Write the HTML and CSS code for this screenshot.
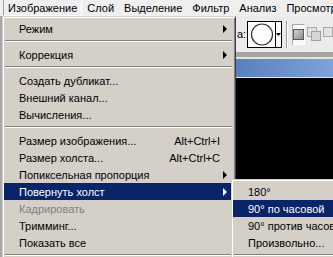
FILE: index.html
```html
<!DOCTYPE html>
<html lang="ru">
<head>
<meta charset="utf-8">
<title>Изображение</title>
<link rel="stylesheet" href="styles.css">
</head>
<body>
<div class="app">
  <div class="menubar">
    <span class="mb-item active">Изображение</span>
    <span class="mb-item">Слой</span>
    <span class="mb-item">Выделение</span>
    <span class="mb-item">Фильтр</span>
    <span class="mb-item">Анализ</span>
    <span class="mb-item">Просмотр</span>
  </div>
  <div class="workspace">
    <div class="lstrip"></div>
    <div class="rest">
      <div class="toolbar">
        <span class="tb-label">а:</span>
        <div class="brush">
          <div class="brush-prev">
            <svg width="26" height="25" viewBox="0 0 26 25"><circle cx="13" cy="12.5" r="10.5" fill="#fff" stroke="#303030" stroke-width="1.2"/></svg>
          </div>
          <div class="brush-dd">
            <svg width="5" height="3" viewBox="0 0 5 3"><polygon points="0,0 5,0 2.5,3" fill="#000"/></svg>
          </div>
        </div>
        <div class="tb-sep"></div>
        <div class="tb-btn pressed">
          <svg width="11" height="11" viewBox="0 0 11 11">
            <defs><linearGradient id="g1" x1="0" y1="0" x2="1" y2="1"><stop offset="0" stop-color="#d8d8d8"/><stop offset="1" stop-color="#8a8a8a"/></linearGradient></defs>
            <rect x="0.5" y="0.5" width="10" height="10" fill="url(#g1)" stroke="#5a5a5a"/>
          </svg>
        </div>
        <div class="tb-btn">
          <svg width="14" height="14" viewBox="0 0 14 14">
            <rect x="0.5" y="0.5" width="9" height="9" fill="#e4e4e4" stroke="#a8a8a8"/>
            <rect x="4.5" y="4.5" width="9" height="9" fill="#d6d6d6" stroke="#a0a0a0"/>
          </svg>
        </div>
        <div class="tb-btn">
          <svg width="14" height="14" viewBox="0 0 14 14">
            <rect x="0.5" y="0.5" width="9" height="9" fill="#e4e4e4" stroke="#a8a8a8"/>
          </svg>
        </div>
      </div>
      <div class="band1"></div>
      <div class="band2"></div>
      <div class="doc">
        <div class="doc-title"></div>
        <div class="doc-line"></div>
        <div class="doc-canvas"></div>
      </div>
    </div>
  </div>

  <div class="menu main-menu">
    <div class="mi"><span class="l">Режим</span><span class="a"></span></div>
    <div class="sep"></div>
    <div class="mi"><span class="l">Коррекция</span><span class="a"></span></div>
    <div class="sep"></div>
    <div class="mi"><span class="l">Создать дубликат...</span></div>
    <div class="mi"><span class="l">Внешний канал...</span></div>
    <div class="mi"><span class="l">Вычисления...</span></div>
    <div class="sep"></div>
    <div class="mi"><span class="l">Размер изображения...</span><span class="k">Alt+Ctrl+I</span></div>
    <div class="mi"><span class="l">Размер холста...</span><span class="k">Alt+Ctrl+C</span></div>
    <div class="mi"><span class="l">Попиксельная пропорция</span><span class="a"></span></div>
    <div class="mi hl"><span class="l">Повернуть холст</span><span class="a"></span></div>
    <div class="mi dis"><span class="l">Кадрировать</span></div>
    <div class="mi"><span class="l">Тримминг...</span></div>
    <div class="mi"><span class="l">Показать все</span></div>
    <div class="sep"></div>
  </div>

  <div class="menu sub-menu">
    <div class="mi"><span class="l">180°</span></div>
    <div class="mi hl"><span class="l">90° по часовой</span></div>
    <div class="mi"><span class="l">90° против часовой</span></div>
    <div class="mi"><span class="l">Произвольно...</span></div>
    <div class="sep"></div>
  </div>
</div>
</body>
</html>
```

FILE: styles.css
```css
* { box-sizing: border-box; margin: 0; padding: 0; }
html, body { width: 333px; height: 257px; overflow: hidden; }
body {
  font-family: "Liberation Sans", Arial, sans-serif;
  font-size: 11px;
  color: #000;
  background: #d4d0c8;
}
.app {
  position: relative;
  width: 333px;
  height: 257px;
  overflow: hidden;
  display: flex;
  flex-direction: column;
}

/* menu bar */
.menubar {
  flex: none;
  height: 16px;
  display: flex;
  padding-left: 3px;
  background: #efefef;
  white-space: nowrap;
}
.mb-item {
  border: 1px solid transparent;
  border-top: 0;
  padding: 1px 4px 0;
  line-height: 14px;
}
.mb-item.active {
  border-color: #a0a0a0 #fff #fff #a0a0a0;
  border-top: 0;
}

/* workspace */
.workspace { flex: 1; display: flex; min-height: 0; }
.lstrip { width: 2px; background: #a8a8a8; }
.rest { flex: 1; display: flex; flex-direction: column; min-width: 0; }

.toolbar {
  flex: none;
  height: 36px;
  display: flex;
  align-items: center;
  padding-left: 235px;
  background: #ebebeb;
  white-space: nowrap;
}
.tb-label { margin-right: 1px; }
.brush {
  width: 38px;
  height: 27px;
  border: 1px solid #000;
  background: #fff;
  display: flex;
}
.brush-prev { width: 27px; display: flex; align-items: center; justify-content: center; }
.brush-dd {
  flex: 1;
  border-left: 1px solid #000;
  display: flex;
  align-items: center;
  justify-content: center;
}
.tb-sep {
  width: 2px;
  height: 27px;
  margin: 0 4px 0 4px;
  border-left: 1px solid #a0a0a0;
  border-right: 1px solid #fff;
}
.tb-btn {
  width: 20px;
  height: 21px;
  display: flex;
  align-items: center;
  justify-content: center;
  margin-right: 2px;
}
.tb-btn.pressed {
  background: #fafafa;
  border: 1px solid;
  border-color: #a8a8a8 #fff #fff #a8a8a8;
}

.band1 { flex: none; height: 5px; background: #a4a4a4; }
.band2 { flex: none; height: 2px; background: #e2e2e2; }
.doc { flex: 1; display: flex; flex-direction: column; }
.doc-title {
  flex: none;
  height: 18px;
  background: linear-gradient(to right, #3c5ea4 0%, #5a7fbf 71%, #7da3d9 100%);
}
.doc-line { flex: none; height: 1px; background: #dde6f2; }
.doc-canvas { flex: 1; background: #000; }

/* drop-down menus */
.menu {
  position: absolute;
  background: #d4d0c8;
  border: 1px solid;
  border-color: #d4d0c8 #404040 #404040 #d4d0c8;
  box-shadow: inset 1px 1px 0 #fff, inset -1px -1px 0 #808080;
  padding: 3px 1px;
  white-space: nowrap;
}
.main-menu { left: 2px; top: 16px; width: 234px; }
.sub-menu { left: 231px; top: 179px; width: 140px; }

.mi {
  height: 17px;
  display: flex;
  align-items: center;
  padding: 0 7px 0 15px;
}
.mi .l { flex: 1; }
.mi .k { margin-right: 7px; }
.mi .a {
  width: 0;
  height: 0;
  border-left: 4px solid #000;
  border-top: 4px solid transparent;
  border-bottom: 4px solid transparent;
}
.mi.hl { background: #0a246a; color: #fff; }
.mi.hl .a { border-left-color: #fff; }
.mi.dis { color: #808080; }

.sep {
  height: 2px;
  margin: 3px 2px 4px 1px;
  border-top: 1px solid #808080;
  border-bottom: 1px solid #fff;
}
```
